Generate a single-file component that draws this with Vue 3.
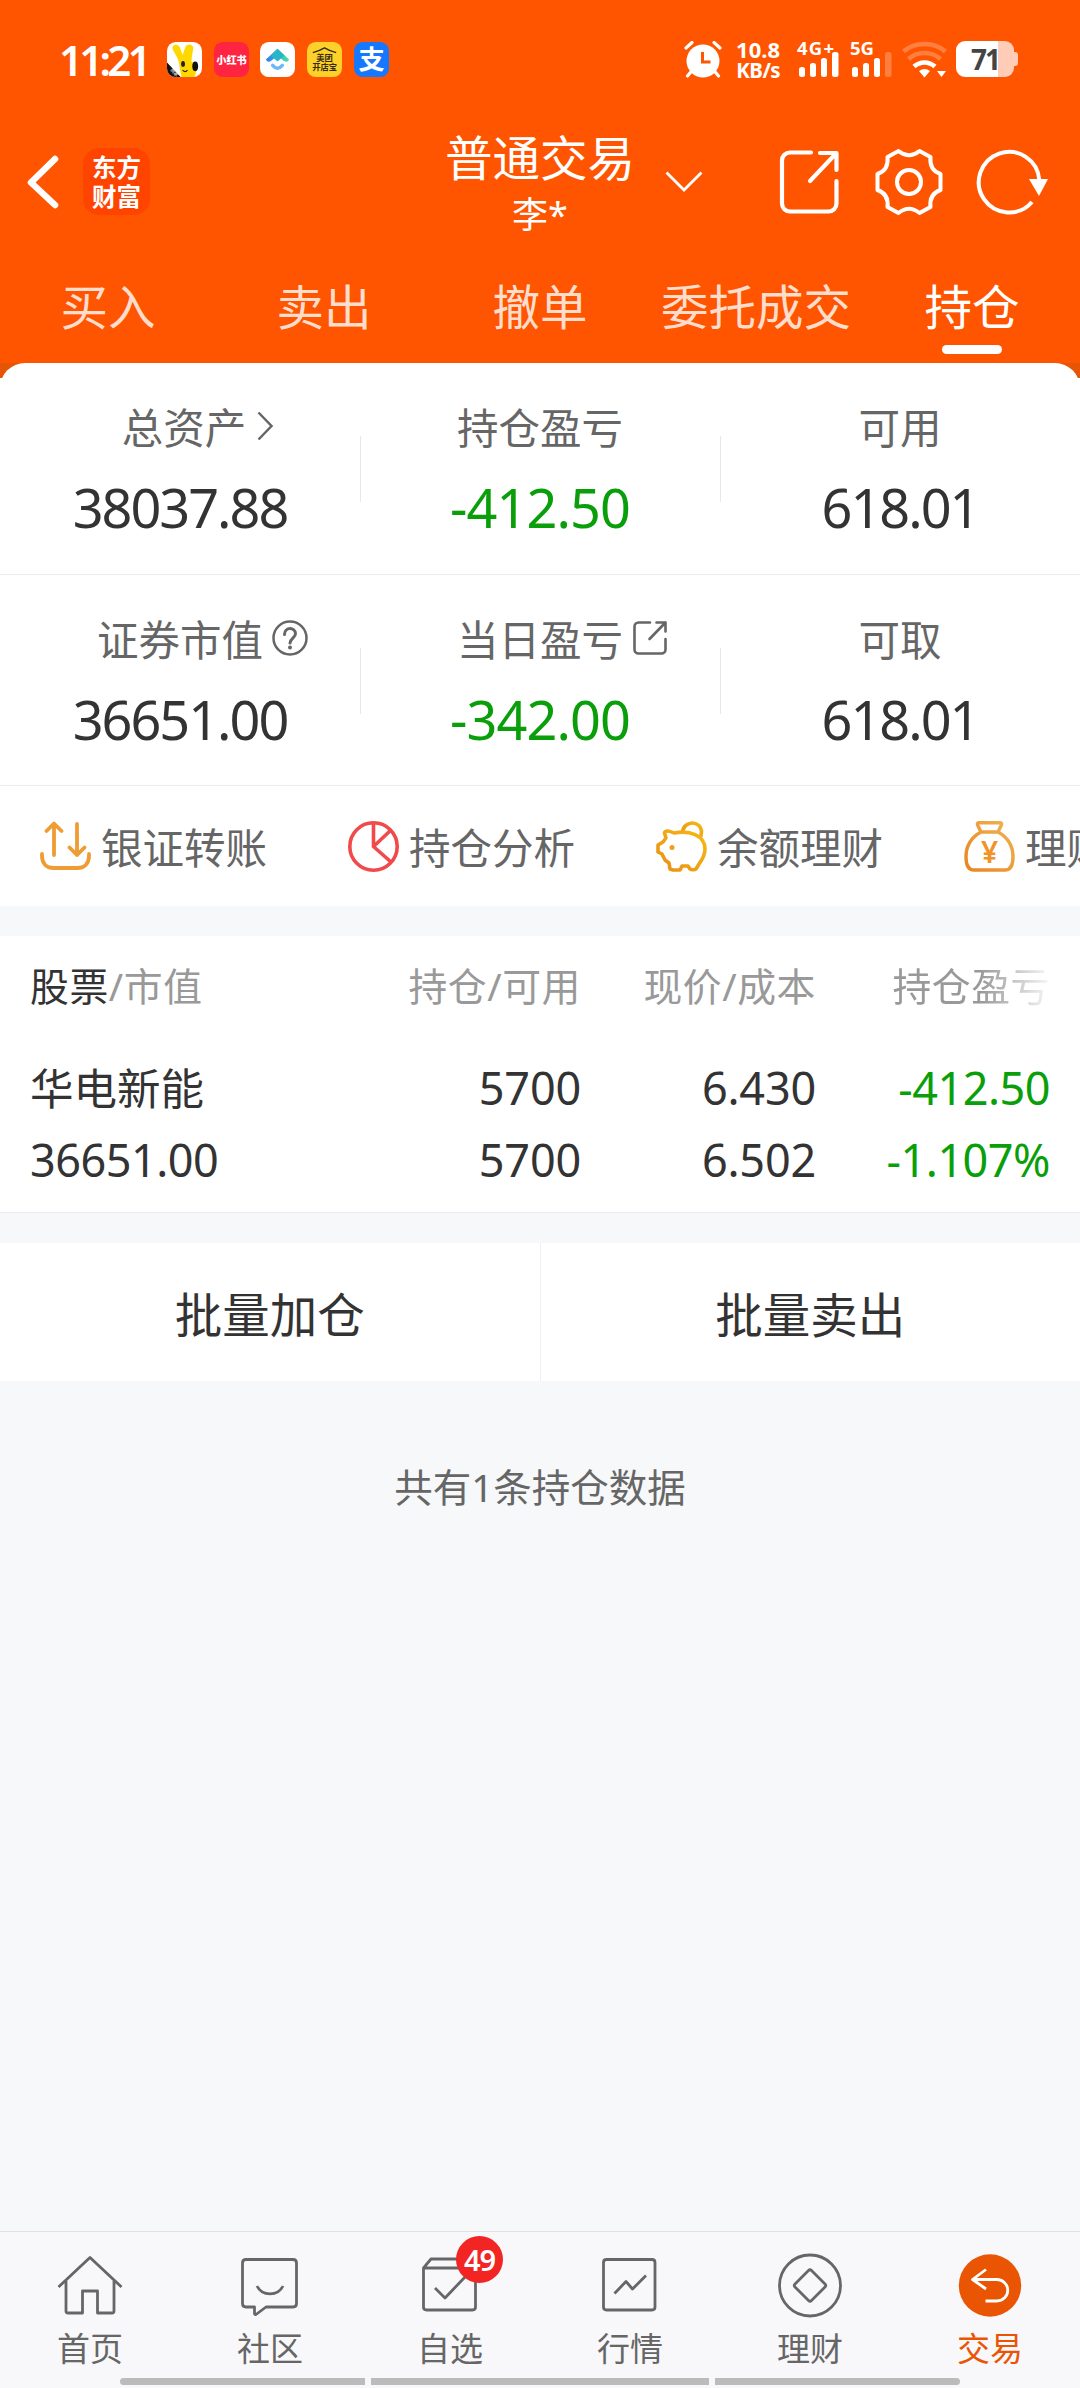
<template>
  <div class="page">
    <header class="header">
      <div class="status">
        <span class="status__time">11:21</span>
        <div class="status__apps">
          <svg class="app-icon" viewBox="0 0 36 36">
            <rect width="36" height="36" rx="9" fill="#fff" />
            <path d="M15 36C13 28 13 23 11 17L6 8C4 3 10 1 13 5l3 8 3-8c2-4 8-3 8 1l-2 14c6 2 7 9 3 16z" fill="#ffd800" />
            <path d="M0 21l14 15H9a9 9 0 0 1-9-9z" fill="#111" />
            <ellipse cx="16.500" cy="22.500" rx="2" ry="3" fill="#222" />
            <ellipse cx="29" cy="25" rx="3" ry="5" fill="#111" />
            <path d="M16 29q3 3 5 0" fill="none" stroke="#222" stroke-width="1.200" />
            <text x="3" y="29" transform="rotate(45 3 29)" font-size="5" fill="#fff">商家</text>
          </svg>
          <svg class="app-icon" viewBox="0 0 36 36">
            <rect width="36" height="36" rx="9" fill="#ff2442" />
            <text x="18" y="22.500" text-anchor="middle" font-size="10.500" font-weight="900" fill="#fff">小红书</text>
          </svg>
          <svg class="app-icon" viewBox="0 0 36 36">
            <defs>
              <linearGradient id="roof" x1="0" x2="1">
                <stop offset="0" stop-color="#2f7df6" />
                <stop offset="1" stop-color="#4fe0a8" />
              </linearGradient>
            </defs>
            <rect width="36" height="36" rx="9" fill="#fff" />
            <path d="M18 7L30 18q-2 4-6 1l-6-5-6 5q-4 3-6-1z" fill="url(#roof)" />
            <path d="M18 7l7 7-7 6-7-6z" fill="#28b5c8" />
            <path d="M13 24q5 6 10 0" fill="none" stroke="#6db8f5" stroke-width="3.500" stroke-linecap="round" />
          </svg>
          <svg class="app-icon" viewBox="0 0 36 36">
            <rect width="36" height="36" rx="9" fill="#fdd02a" />
            <path d="M6 11q7-2 12-5 5 3 12 5" fill="none" stroke="#332b10" stroke-width="1.300" />
            <text x="18" y="19.500" text-anchor="middle" font-size="8.500" font-weight="700" fill="#332b10">美团</text>
            <text x="18" y="28.500" text-anchor="middle" font-size="8.500" font-weight="700" fill="#332b10">开店宝</text>
          </svg>
          <svg class="app-icon" viewBox="0 0 36 36">
            <rect width="36" height="36" rx="9" fill="#1677ff" />
            <text x="18" y="27.500" text-anchor="middle" font-size="27" font-weight="700" fill="#fff">支</text>
          </svg>
        </div>
        <div class="status__right">
          <svg class="alarm" width="38" height="37" viewBox="0 0 38 37">
            <circle cx="19" cy="20" r="16.500" fill="#fff" />
            <path d="M2 7l6-5.500M36 7l-6-5.500M3.500 35l5-6M34.500 35l-5-6" stroke="#fff" stroke-width="3.200" stroke-linecap="round" />
            <path d="M18.500 11v10h8" fill="none" stroke="#ff5500" stroke-width="3" />
          </svg>
          <div class="speed">
            <span>10.8</span>
            <span class="speed__unit">KB/s</span>
          </div>
          <svg class="signal" width="45" height="38" viewBox="0 0 45 38" fill="#fff">
            <text x="0" y="15" font-size="18.500" font-weight="700" textLength="37">4G+</text>
            <rect x="2" y="27" width="6" height="10" rx="2.500" />
            <rect x="13" y="23" width="6" height="14" rx="2.500" />
            <rect x="24" y="18" width="6" height="19" rx="2.500" />
            <rect x="35" y="12" width="6.500" height="25" rx="2.500" />
          </svg>
          <svg class="signal signal--second" width="45" height="38" viewBox="0 0 45 38" fill="#fff">
            <text x="0" y="15" font-size="18.500" font-weight="700" textLength="24">5G</text>
            <rect x="2" y="27" width="6" height="10" rx="2.500" />
            <rect x="13" y="23" width="6" height="14" rx="2.500" />
            <rect x="24" y="18" width="6" height="19" rx="2.500" />
            <rect x="35" y="12" width="6.500" height="25" rx="2.500" opacity=".25" />
          </svg>
          <svg class="wifi" width="46" height="37" viewBox="0 0 46 37" fill="none" stroke="#fff" stroke-width="4.500">
            <path d="M1.500 10.500C13 .5 32 .5 43.500 10.500" opacity=".25" />
            <path d="M6.500 18C15 10 30 10 38.500 18" opacity=".25" />
            <path d="M12 25.500C18 20 27 20 33 25.500" />
            <path d="M17 30q5.500-4 11 0l-5.500 6.500zM35 30h9l-4.500 6z" fill="#fff" stroke="none" />
          </svg>
          <div class="battery">
            <span class="battery__text">71</span>
          </div>
        </div>
      </div>

      <div class="nav">
        <div class="nav__left">
          <svg class="back" width="34" height="60" viewBox="0 0 34 60" fill="none" stroke="#fff" stroke-width="6.500" stroke-linecap="round" stroke-linejoin="round">
            <path d="M29 7L5 30.500 29 53" />
          </svg>
          <div class="brand">
            <span>东方</span>
            <span>财富</span>
          </div>
        </div>
        <div class="nav__title">
          <span class="nav__name">普通交易</span>
          <span class="nav__user">李*</span>
        </div>
        <div class="nav__right">
          <svg class="nav__caret" width="38" height="22" viewBox="0 0 38 22" fill="none" stroke="#fff" stroke-width="2.800">
            <path d="M1.500 1.500L19 19 36.500 1.500" />
          </svg>
          <svg class="nav__share" width="60" height="66" viewBox="0 0 60 66" fill="none" stroke="#fff" stroke-width="4.200" stroke-linecap="round" stroke-linejoin="round">
            <path d="M32 3.500H11a8 8 0 0 0-8 8v43a8 8 0 0 0 8 8h38.500a8 8 0 0 0 8-8V32M41 4h16.500v17M57 4.500L31 32" />
          </svg>
          <svg class="nav__gear" width="68" height="68" viewBox="-34 -34 68 68" fill="none" stroke="#fff" stroke-width="4" stroke-linejoin="round">
            <path d="M-10.500-31Q0-22.500 10.500-31L21.500-25Q20-12 31.500-8V8Q20 12 21.500 25L10.500 31Q0 22.500-10.500 31L-21.500 25Q-20 12-31.500 8V-8Q-20-12-21.500-25Z" />
            <circle r="12" />
          </svg>
          <svg class="nav__refresh" width="74" height="68" viewBox="-34 -34 74 68" fill="none" stroke="#fff" stroke-width="4">
            <path d="M23 20A30.300 30.300 0 1 1 30.300-2" />
            <path d="M20-3h19L30 14z" fill="#fff" stroke="none" />
          </svg>
        </div>
      </div>

      <nav class="tabs">
        <span
          v-for="tab in tabs"
          :key="tab"
          class="tabs__item"
          :class="{ 'tabs__item--active': tab === activeTab }"
          @click="activeTab = tab"
        >{{ tab }}</span>
      </nav>
    </header>

    <div class="sheet-edge">
      <section class="summary">
        <div v-for="(row, i) in summary" :key="i" class="summary__row">
          <div v-for="cell in row" :key="cell.label" class="cell">
            <div class="cell__label">
              <span>{{ cell.label }}</span>
              <svg v-if="cell.icon === 'arrow'" class="cell__arrow" width="17" height="30" viewBox="0 0 17 30" fill="none" stroke="#666" stroke-width="2.500">
                <path d="M1.500 1.500L14.500 15 1.500 28.500" />
              </svg>
              <svg v-if="cell.icon === 'help'" class="cell__icon" width="36" height="36" viewBox="0 0 36 36" fill="none" stroke="#666" stroke-width="2.500">
                <circle cx="18" cy="18" r="16.500" />
                <path d="M12.500 14.500c0-8 11-7.500 11-.8 0 4-5.500 4.800-5.500 9.300" stroke-width="3" stroke-linecap="round" />
                <circle cx="18" cy="27.500" r="2" fill="#666" stroke="none" />
              </svg>
              <svg v-if="cell.icon === 'share'" class="cell__icon" width="36" height="36" viewBox="0 0 36 36" fill="none" stroke="#666" stroke-width="2.600" stroke-linecap="round" stroke-linejoin="round">
                <path d="M18 2.500H6.500a4 4 0 0 0-4 4v23a4 4 0 0 0 4 4h23a4 4 0 0 0 4-4V19M24.500 2.500h9v9M33.500 2.500L17.500 19" />
              </svg>
            </div>
            <div class="cell__value" :class="{ 'cell__value--down': cell.down }">{{ cell.value }}</div>
          </div>
        </div>
      </section>
    </div>

    <section class="shortcuts">
      <div class="shortcut">
        <svg class="shortcut__icon" viewBox="0 0 51 51" fill="none" stroke="#ee9c33" stroke-width="3.800" stroke-linecap="round" stroke-linejoin="round">
          <path d="M14 34V3M6.500 10L14 2.500 21.500 10M37 3v31M29.500 26.500L37 34l7.500-7.500M2 33v2c0 8 5 12 12 12h23c7 0 12-4 12-12v-2" />
        </svg>
        <span>银证转账</span>
      </div>
      <div class="shortcut">
        <svg class="shortcut__icon" viewBox="0 0 51 51" fill="none" stroke="#f04a4c" stroke-width="3.600">
          <circle cx="25.500" cy="25.500" r="23.700" />
          <path d="M25.500 2v23.500L43 41M25.500 25.500L42.500 9.500" />
        </svg>
        <span>持仓分析</span>
      </div>
      <div class="shortcut">
        <svg class="shortcut__icon" viewBox="0 0 51 51" fill="none" stroke="url(#pig)" stroke-width="3.600" stroke-linejoin="round">
          <defs>
            <linearGradient id="pig" x1="0" y1="1" x2="1" y2="0">
              <stop offset="0" stop-color="#ea9018" />
              <stop offset="1" stop-color="#f5b813" />
            </linearGradient>
          </defs>
          <path d="M26.500 11C28-1 45-1 45.500 11l-.8 5" />
          <path d="M8.500 12c.5-3 5-2.500 9.500 0C33 9 49 14 49 28c0 6-3 11-6 15l-3 5c-1 1-5 1-6 0l-2-3h-6l-2 4h-7l-3-1-1-6-4-3-3-6-4-2v-7l5-3 3-4z" />
          <circle cx="16" cy="26.500" r="2.500" fill="#ee9f18" stroke="none" />
        </svg>
        <span>余额理财</span>
      </div>
      <div class="shortcut">
        <svg class="shortcut__icon" viewBox="0 0 51 51" fill="none" stroke="url(#bag)" stroke-width="3.400" stroke-linejoin="round">
          <defs>
            <linearGradient id="bag" x1="0" y1="1" x2="1" y2="0">
              <stop offset="0" stop-color="#ea8420" />
              <stop offset="1" stop-color="#f0b354" />
            </linearGradient>
          </defs>
          <path d="M15 1.800h21q2 0 1.500 2L34 11H17l-3.500-7.200q-.5-2 1.500-2zM17 11C6 17 2 26 2 36c0 8 2 13 8 13h31c6 0 8-5 8-13 0-10-4-19-15-25" />
          <text x="25.500" y="42" text-anchor="middle" font-size="30" font-weight="600" fill="#f09329" stroke="none">¥</text>
        </svg>
        <span>理财</span>
      </div>
    </section>

    <section class="holdings">
      <div class="holdings__row holdings__row--head">
        <span class="col-name"><b>股票</b>/市值</span>
        <span class="col-hold">持仓/可用</span>
        <span class="col-price">现价/成本</span>
        <span class="col-profit col-profit--fade">持仓盈亏</span>
      </div>
      <div v-for="item in holdings" :key="item.name" class="holdings__item">
        <div class="holdings__row">
          <span class="col-name">{{ item.name }}</span>
          <span class="col-hold">{{ item.amount }}</span>
          <span class="col-price">{{ item.price }}</span>
          <span class="col-profit is-down">{{ item.profit }}</span>
        </div>
        <div class="holdings__row">
          <span class="col-name">{{ item.marketValue }}</span>
          <span class="col-hold">{{ item.available }}</span>
          <span class="col-price">{{ item.cost }}</span>
          <span class="col-profit is-down">{{ item.rate }}</span>
        </div>
      </div>
    </section>

    <section class="batch">
      <button type="button" class="batch__btn">批量加仓</button>
      <button type="button" class="batch__btn">批量卖出</button>
    </section>

    <p class="total">共有{{ holdings.length }}条持仓数据</p>

    <footer class="tabbar">
      <div class="tabbar__items">
        <div v-for="item in menu" :key="item.label" class="tabbar__item" :class="{ 'tabbar__item--active': item.active }">
          <div class="tabbar__icon">
            <svg width="66" height="66" viewBox="0 0 66 66" fill="none" stroke="#666" stroke-width="2.800" stroke-linejoin="round">
              <circle v-if="item.active" cx="33" cy="33.500" r="31.200" fill="#ea5504" stroke="none" />
              <path :d="item.path" :stroke="item.active ? '#fff' : '#666'" />
            </svg>
            <span v-if="item.badge" class="badge">{{ item.badge }}</span>
          </div>
          <span class="tabbar__label">{{ item.label }}</span>
        </div>
      </div>
      <div class="home-bar">
        <i class="home-bar__side home-bar__side--left"></i>
        <i class="home-bar__mid"></i>
        <i class="home-bar__side home-bar__side--right"></i>
      </div>
    </footer>
  </div>
</template>

<script setup>
import { ref } from 'vue'

const tabs = ['买入', '卖出', '撤单', '委托成交', '持仓']
const activeTab = ref('持仓')

const summary = [
  [
    { label: '总资产', value: '38037.88', icon: 'arrow' },
    { label: '持仓盈亏', value: '-412.50', down: true },
    { label: '可用', value: '618.01' }
  ],
  [
    { label: '证券市值', value: '36651.00', icon: 'help' },
    { label: '当日盈亏', value: '-342.00', icon: 'share', down: true },
    { label: '可取', value: '618.01' }
  ]
]

const holdings = [
  {
    name: '华电新能',
    marketValue: '36651.00',
    amount: '5700',
    available: '5700',
    price: '6.430',
    cost: '6.502',
    profit: '-412.50',
    rate: '-1.107%'
  }
]

const menu = [
  {
    label: '首页',
    path: 'M1.500 35L33 5.500 64.500 35M9 29v30q0 2 2 2h14.500V39h15v22H55q2 0 2-2V29'
  },
  {
    label: '社区',
    path: 'M9 7.500h47q3.500 0 3.500 3.500v40.500q0 3.500-3.500 3.500H29l-10 7.500q-1.500.5-1.500-1.500v-6H9q-3.500 0-3.500-3.500V11q0-3.500 3.500-3.500zM20 34c5 10.500 21 10.500 26 0'
  },
  {
    label: '自选',
    badge: 49,
    path: 'M6.500 16h52v39q0 3-3 3h-46q-3 0-3-3zl7.500-9h38l6.500 9M18 36l10 10 20-21'
  },
  {
    label: '行情',
    path: 'M9.500 7.500h45.500q3 0 3 3v44.500q0 3-3 3H9.500q-3 0-3-3V10.500q0-3 3-3zM17.500 41.500l11.500-12 6.500 7.500L49 23.500'
  },
  {
    label: '理财',
    path: 'M33 3a30.500 30.500 0 1 1 0 61 30.500 30.500 0 1 1 0-61zM31.500 18.500q1.500-1.500 3 0L48 32q1.500 1.500 0 3L34.500 48.500q-1.500 1.500-3 0L18 35q-1.500-1.500 0-3z'
  },
  {
    label: '交易',
    active: true,
    path: 'M29 17.500L15.500 27.500 29 37M15.500 27.500H40a10.700 10.700 0 0 1 0 21.500H28.500'
  }
]
</script>

<style>
body {
  background: #f7f8fa;
}
</style>

<style scoped>
.page {
  display: flex;
  flex-direction: column;
  width: 1080px;
  height: 2388px;
  overflow: hidden;
  background: #f7f8fa;
  color: #333;
  font-family: "Noto Sans", "Noto Sans CJK SC", sans-serif;
}

.header {
  height: 363px;
  flex-shrink: 0;
  background: #ff5500;
  color: #fff;
}

.status {
  display: flex;
  align-items: center;
  box-sizing: border-box;
  height: 118px;
  padding: 0 60px 0 59px;
}

.status__time {
  width: 108px;
  font-size: 42px;
  font-weight: 600;
  letter-spacing: -3.8px;
}

.status__apps {
  display: flex;
  gap: 11.7px;
}

.app-icon {
  width: 35px;
  height: 35px;
}

.status__right {
  display: flex;
  align-items: center;
  margin-left: auto;
}

.speed {
  display: flex;
  flex-direction: column;
  align-items: flex-end;
  width: 58px;
  font-size: 22px;
  font-weight: 700;
  line-height: 21px;
}

.speed__unit {
  font-size: 20.5px;
  letter-spacing: -0.6px;
  line-height: 20px;
}

.signal {
  margin-left: 17px;
  overflow: visible;
}

.signal--second {
  margin-left: 8px;
}

.wifi {
  margin-left: 7px;
}

.battery {
  position: relative;
  width: 58px;
  height: 36px;
  margin-left: 8px;
  margin-right: 6px;
  border-radius: 9px;
  background: linear-gradient(90deg, #fff 42px, #ffccb8 42px);
  text-align: center;
}

.battery::after {
  content: "";
  position: absolute;
  right: -4px;
  top: 11px;
  width: 4px;
  height: 14px;
  border-radius: 0 3px 3px 0;
  background: #ffccb8;
}

.battery__text {
  font-size: 28px;
  font-weight: 700;
  line-height: 36px;
  letter-spacing: -2px;
  color: #444;
}

.nav {
  display: flex;
  height: 127px;
}

.nav__left,
.nav__right {
  display: flex;
  align-items: center;
  width: 410px;
}

.back {
  margin-left: 26px;
}

.brand {
  display: flex;
  flex-direction: column;
  align-items: center;
  justify-content: center;
  width: 67px;
  height: 67px;
  margin-left: 23px;
  border-radius: 16px;
  background: #ff4400;
  font-size: 24.5px;
  font-weight: 700;
  line-height: 29px;
}

.nav__title {
  display: flex;
  flex-direction: column;
  align-items: center;
  width: 260px;
  padding-top: 10px;
}

.nav__name {
  font-size: 47.5px;
  line-height: 60px;
}

.nav__user {
  font-size: 36px;
  line-height: 54px;
}

.nav__caret {
  margin-left: -5px;
}

.nav__share {
  margin-left: 76px;
}

.nav__gear {
  margin-left: 36px;
}

.nav__refresh {
  margin-left: 32px;
}

.tabs {
  display: flex;
  height: 118px;
}

.tabs__item {
  display: flex;
  flex: 1;
  flex-direction: column;
  align-items: center;
  padding-top: 33px;
  font-size: 47.5px;
  line-height: 58px;
  white-space: nowrap;
  color: #ffddcc;
}

.tabs__item--active {
  color: #fff;
}

.tabs__item--active::after {
  content: "";
  width: 60px;
  height: 9px;
  margin-top: 9px;
  border-radius: 5px;
  background: #fff;
}

.sheet-edge {
  flex-shrink: 0;
  background: linear-gradient(#e65505 15px, #fff 15px);
}

.summary {
  border-radius: 25px 25px 0 0;
  background: #fff;
}

.summary__row {
  display: flex;
  box-sizing: border-box;
  height: 211.5px;
  border-bottom: 1.5px solid #ececec;
}

.cell {
  display: flex;
  flex: 1;
  flex-direction: column;
  align-items: center;
  padding-top: 35px;
}

.cell + .cell {
  background: linear-gradient(#e8e8e8, #e8e8e8) no-repeat 0 73px / 1px 66px;
}

.cell__label {
  display: flex;
  align-items: center;
  font-size: 41.5px;
  line-height: 60px;
  color: #666;
}

.cell__arrow {
  margin: -4px -36px 0 11px;
}

.cell__icon {
  margin: -4px -45px 0 9px;
}

.cell__value {
  margin-top: 14px;
  font-size: 54px;
  line-height: 70px;
  letter-spacing: -2px;
}

.cell__value--down {
  letter-spacing: -0.9px;
  color: #0a9f0a;
}

.is-down {
  color: #0a9f0a;
}

.shortcuts {
  display: flex;
  flex-shrink: 0;
  height: 120px;
  padding-left: 40px;
  overflow: hidden;
  background: #fff;
}

.shortcut {
  display: flex;
  flex: 0 0 308px;
  align-items: center;
  gap: 10px;
  font-size: 41.5px;
  white-space: nowrap;
  color: #666;
}

.shortcut__icon {
  flex-shrink: 0;
  width: 51px;
  height: 51px;
}

.holdings {
  flex-shrink: 0;
  box-sizing: border-box;
  height: 277px;
  margin-top: 30px;
  padding: 14px 30px 0;
  border-bottom: 1px solid #e8eaed;
  background: #fff;
}

.holdings__row {
  display: flex;
  height: 72px;
  font-size: 45px;
  line-height: 72px;
  letter-spacing: -0.5px;
  white-space: nowrap;
}

.holdings__row--head {
  margin-bottom: 30px;
  font-size: 38.8px;
  letter-spacing: 0.6px;
  color: #999;
}

.holdings__row--head b {
  font-weight: 400;
  color: #333;
}

.col-name {
  width: 300px;
}

.holdings__item .holdings__row:first-child .col-name {
  font-size: 43.5px;
  letter-spacing: 0;
}

.col-hold {
  width: 251px;
  text-align: right;
}

.col-price {
  width: 235px;
  text-align: right;
}

.holdings__item .col-hold,
.holdings__item .col-price {
  letter-spacing: -0.2px;
}

.col-profit {
  width: 234px;
  text-align: right;
}

.col-profit--fade {
  mask-image: linear-gradient(90deg, #000 165px, transparent 240px);
}

.batch {
  display: flex;
  flex-shrink: 0;
  height: 138px;
  margin-top: 30px;
  background: #fff;
}

.batch__btn {
  flex: 1;
  padding: 0;
  border: 0;
  background: none;
  font: inherit;
  font-size: 47.5px;
  color: #333;
}

.batch__btn + .batch__btn {
  border-left: 1px solid #f1f1f3;
}

.total {
  margin: 76px 0 0;
  font-size: 38.5px;
  line-height: 60px;
  text-align: center;
  color: #666;
}

.tabbar {
  box-sizing: border-box;
  height: 157px;
  flex-shrink: 0;
  margin-top: auto;
  border-top: 1px solid #dfe1e3;
  background: #f8f8fa;
}

.tabbar__items {
  display: flex;
  height: 146px;
}

.tabbar__item {
  display: flex;
  flex: 1;
  flex-direction: column;
  align-items: center;
  padding-top: 20px;
  font-size: 33px;
  color: #666;
}

.tabbar__item--active {
  color: #ea5504;
}

.tabbar__icon {
  position: relative;
  height: 66px;
}

.tabbar__label {
  margin-top: 10px;
  line-height: 42px;
}

.badge {
  position: absolute;
  left: 39px;
  top: -16px;
  width: 47px;
  height: 47px;
  border-radius: 50%;
  background: #f22424;
  color: #fff;
  font-size: 29px;
  font-weight: 600;
  line-height: 47px;
  letter-spacing: -1px;
  text-align: center;
}

.home-bar {
  display: flex;
  justify-content: center;
  gap: 6px;
}

.home-bar__side,
.home-bar__mid {
  width: 245px;
  height: 7px;
  background: #bbb;
}

.home-bar__mid {
  width: 338px;
}

.home-bar__side--left {
  border-radius: 4px 0 0 4px;
}

.home-bar__side--right {
  border-radius: 0 4px 4px 0;
}
</style>
